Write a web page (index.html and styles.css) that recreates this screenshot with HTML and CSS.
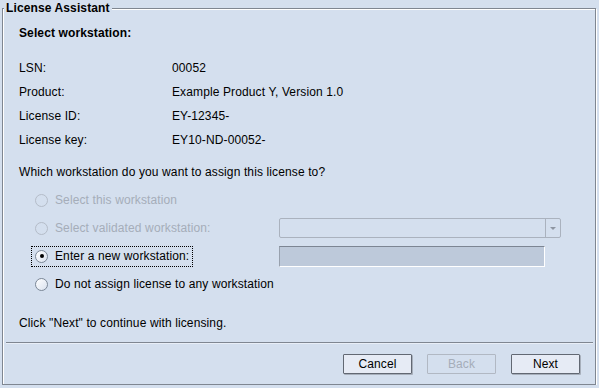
FILE: index.html
```html
<!DOCTYPE html>
<html lang="en">
<head>
    <meta charset="UTF-8">
    <title>License Assistant</title>
    <link rel="stylesheet" href="styles.css">
</head>
<body>
    <fieldset class="assistant">
        <legend>License Assistant</legend>

        <div class="content">
            <h2 class="step-title">Select workstation:</h2>

            <div class="info">
                <span>LSN:</span><span>00052</span>
                <span>Product:</span><span>Example Product Y, Version 1.0</span>
                <span>License ID:</span><span>EY-12345-</span>
                <span>License key:</span><span>EY10-ND-00052-</span>
            </div>

            <p class="question">Which workstation do you want to assign this license to?</p>

            <div class="choices">
                <div class="choice disabled">
                    <label class="radio-label"><span class="radio"></span>Select this workstation</label>
                </div>
                <div class="choice disabled">
                    <label class="radio-label"><span class="radio"></span>Select validated workstation:</label>
                    <div class="combo"><span class="combo-arrow"></span></div>
                </div>
                <div class="choice">
                    <label class="radio-label focused"><span class="radio checked"></span>Enter a new workstation:</label>
                    <div class="text-field"></div>
                </div>
                <div class="choice">
                    <label class="radio-label"><span class="radio"></span>Do not assign license to any workstation</label>
                </div>
            </div>

            <p class="note">Click "Next" to continue with licensing.</p>
        </div>

        <div class="separator"></div>

        <div class="buttons">
            <button class="btn">Cancel</button>
            <button class="btn" disabled>Back</button>
            <button class="btn">Next</button>
        </div>
    </fieldset>
</body>
</html>
```

FILE: styles.css
```css
body {
    margin: 0;
    background-color: #d4dfee;
    font-family: "Liberation Sans", Arial, sans-serif;
    font-size: 12px;
    letter-spacing: 0.12px;
    color: #000;
}

.assistant {
    margin: 1px 3px 0 2px;
    padding: 0 0 10px 0;
    border: 1px solid #7f8691;
    box-shadow: inset 1px 1px 0 #fff, 1px 1px 0 #fff;
    min-width: 0;
}

.assistant legend {
    margin-left: 1px;
    padding: 0 2px;
    line-height: 14px;
    font-weight: bold;
    background-color: #d4dfee;
}

.content {
    padding: 10px 16px 0 16px;
}

.step-title {
    margin: 0;
    font-size: 12px;
    line-height: 16px;
}

.info {
    margin-top: 15px;
    display: grid;
    grid-template-columns: 153px 1fr;
    grid-auto-rows: 24px;
    align-items: center;
}

.question {
    margin: 12px 0 0 0;
    line-height: 16px;
}

.choices {
    margin: 6px 0 0 12px;
}

.choice {
    height: 28px;
    display: grid;
    grid-template-columns: 248px auto;
    align-items: center;
}

.radio-label {
    justify-self: start;
    display: flex;
    align-items: center;
    gap: 7px;
    height: 19px;
    padding: 0 3px;
    border: 1px dotted transparent;
}

.radio-label.focused {
    border-color: #000;
}

.radio {
    width: 11px;
    height: 11px;
    border: 1px solid #7b8796;
    border-radius: 50%;
    background: linear-gradient(135deg, #ffffff, #d9e1ee);
    display: flex;
    align-items: center;
    justify-content: center;
}

.radio.checked::after {
    content: "";
    width: 4px;
    height: 4px;
    border-radius: 50%;
    background-color: #000;
}

.disabled .radio-label {
    color: #a5adb9;
}

.disabled .radio {
    border-color: #b4bcc8;
    background: #d4dfee;
}

.combo {
    width: 280px;
    height: 18px;
    border: 1px solid #aab2be;
    border-radius: 2px;
    display: flex;
    justify-content: flex-end;
}

.combo-arrow {
    width: 14px;
    border-left: 1px solid #aab2be;
    display: flex;
    align-items: center;
    justify-content: center;
}

.combo-arrow::after {
    content: "";
    border-left: 3px solid transparent;
    border-right: 3px solid transparent;
    border-top: 3px solid #8d95a1;
}

.text-field {
    width: 264px;
    height: 19px;
    background-color: #bdc9da;
    border: 1px solid #fff;
    border-top-color: #7c8593;
    border-left-color: #98a1ae;
}

.note {
    margin: 17px 0 0 0;
    line-height: 16px;
}

.separator {
    margin: 11px 2px 0 3px;
    height: 1px;
    background-color: #7f8691;
    border-bottom: 1px solid #e8eef7;
}

.buttons {
    margin-top: 10px;
    padding-right: 15px;
    display: flex;
    justify-content: flex-end;
    gap: 15px;
}

.btn {
    width: 69px;
    height: 20px;
    padding: 0;
    font-family: "Liberation Sans", Arial, sans-serif;
    font-size: 12px;
    letter-spacing: 0.12px;
    color: #000;
    background-color: #e6ebf5;
    border: 1px solid #626873;
    border-radius: 1px;
    box-shadow: 1px 1px 0 #a7afbb;
}

.btn:disabled {
    color: #a5adb9;
    background-color: #d4dfee;
    border-color: #b1b8c3;
    box-shadow: none;
}
```
